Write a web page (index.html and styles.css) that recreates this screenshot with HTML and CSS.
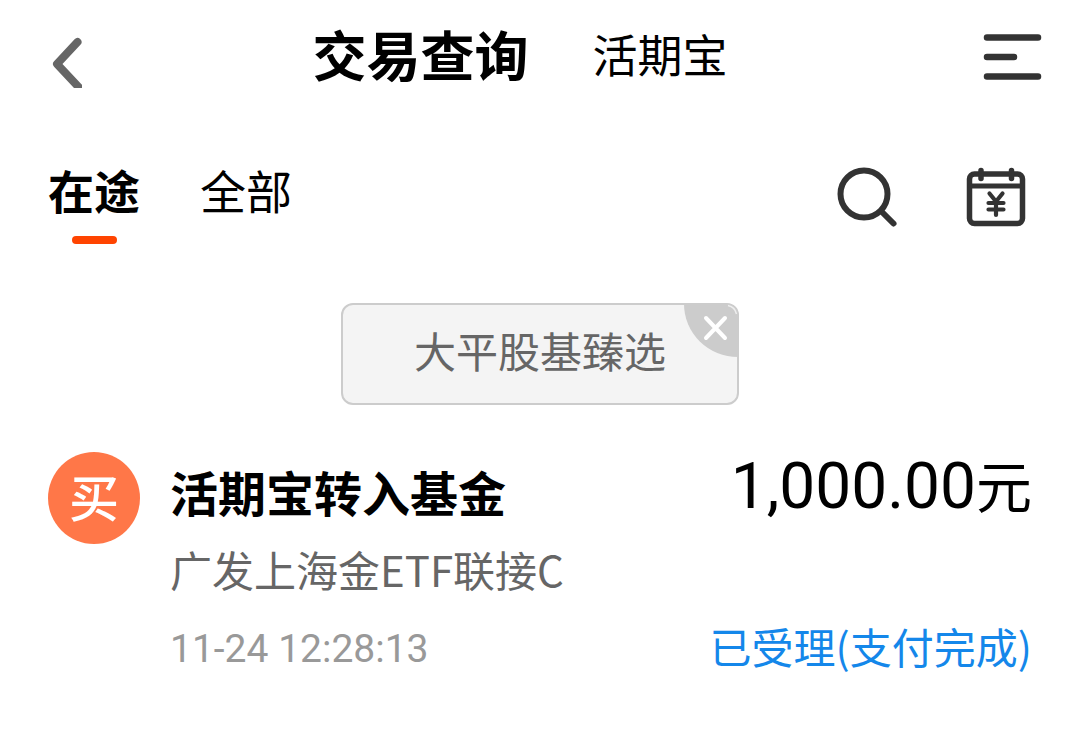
FILE: index.html
```html
<!DOCTYPE html>
<html lang="zh-CN">
<head>
<meta charset="utf-8">
<meta name="viewport" content="width=device-width, initial-scale=1">
<title>交易查询</title>
<link rel="stylesheet" href="styles.css">
</head>
<body>
<header class="topbar">
  <button class="icon-btn" type="button" aria-label="返回">
    <svg width="34" height="64" viewBox="0 0 34 64"><path d="M29.500 18 9 40 31 63.500" fill="none" stroke="#666" stroke-width="8" stroke-linecap="round" stroke-linejoin="round"/></svg>
  </button>
  <nav class="topnav">
    <h1 class="topnav-title">交易查询</h1>
    <a class="topnav-link" href="#">活期宝</a>
  </nav>
  <button class="icon-btn menu-btn" type="button" aria-label="菜单">
    <svg width="60" height="48" viewBox="0 0 60 48"><path d="M5 5.500H56M5 25H32M5 44.500H56" fill="none" stroke="#333" stroke-width="6.500" stroke-linecap="round"/></svg>
  </button>
</header>

<main class="content">
  <section class="filters">
    <nav class="tabs">
      <a class="tab tab-active" href="#" aria-current="page">在途</a>
      <a class="tab" href="#">全部</a>
    </nav>
    <div class="tools">
      <button class="icon-btn" type="button" aria-label="搜索">
        <svg width="62" height="62" viewBox="0 0 62 62"><g fill="none" stroke="#333" stroke-linecap="round"><circle cx="28" cy="28" r="23.500" stroke-width="6"/><path d="M46 46 57.500 57.500" stroke-width="6"/></g></svg>
      </button>
      <button class="icon-btn" type="button" aria-label="选择日期">
        <svg width="60" height="60" viewBox="0 0 60 60"><g fill="none" stroke="#333" stroke-linecap="round" stroke-linejoin="round"><rect x="3.500" y="7" width="53" height="49.500" rx="5" stroke-width="5.500"/><path d="M4 19H56" stroke-width="5"/><path d="M15 3.500V11.500M45.500 3.500V11.500" stroke-width="5.500"/><path d="M23.500 26.500 30 34.500 36.500 26.500M30 35V48M22.500 36H37.500M22.500 42.500H37.500" stroke-width="4.200"/></g></svg>
      </button>
    </div>
  </section>

  <div class="chip">
    <span>大平股基臻选</span>
    <button class="chip-close" type="button" aria-label="移除">
      <svg width="54" height="53" viewBox="0 0 54 53"><path d="M0 0H44A10 10 0 0 1 54 10V53A54 53 0 0 1 0 0Z" fill="#ccc"/><path d="M22 14 41 34M41 14 22 34" stroke="#fff" stroke-width="4" stroke-linecap="round"/><path d="M44 1.500Q51 3 52.500 10" fill="none" stroke="#eee" stroke-width="1.500"/></svg>
    </button>
  </div>

  <article class="record">
    <span class="badge">买</span>
    <div class="detail">
      <h2 class="record-title">活期宝转入基金</h2>
      <p class="fund">广发上海金ETF联接C</p>
      <time class="time">11-24 12:28:13</time>
    </div>
    <div class="result">
      <p class="amount">1,000.00<span class="unit">元</span></p>
      <p class="status">已受理(支付完成)</p>
    </div>
  </article>
</main>
</body>
</html>
```
FILE: styles.css
```css
* {
  box-sizing: border-box;
}

body {
  margin: 0;
  background: #fff;
  color: #000;
  font-family: "Noto Sans CJK SC", "Noto Sans", sans-serif;
}

h1, h2, p {
  margin: 0;
}

a {
  color: inherit;
  text-decoration: none;
}

svg {
  display: block;
}

.icon-btn {
  padding: 0;
  border: 0;
  background: none;
  cursor: pointer;
}

.topbar {
  display: flex;
  align-items: center;
  justify-content: space-between;
  min-height: 112px;
  padding: 0 38px 0 48px;
}

.menu-btn {
  padding-left: 24px;
}

.topnav {
  display: flex;
  align-items: center;
  gap: 64px;
  padding-bottom: 4px;
}

.topnav-title {
  font-size: 54px;
  font-weight: 700;
  line-height: 64px;
}

.topnav-link {
  font-size: 45px;
  line-height: 64px;
}

.content {
  padding: 45px 48px 0;
}

.filters {
  display: flex;
  align-items: flex-start;
  justify-content: space-between;
}

.tabs {
  display: flex;
  gap: 60px;
}

.tab {
  display: flex;
  flex-direction: column;
  align-items: center;
  font-size: 46px;
  line-height: 64px;
}

.tab-active {
  font-weight: 700;
}

.tab-active::after {
  content: "";
  width: 45px;
  height: 8px;
  margin-top: 15px;
  border-radius: 4px;
  background: #ff4400;
}

.tools {
  display: flex;
  gap: 68px;
  padding: 9px 6px 0 0;
}

.chip {
  position: relative;
  width: fit-content;
  margin: 59px auto 0;
  padding: 13px 71px 21px;
  border: 2px solid #ccc;
  border-radius: 12px;
  background: #f4f4f4;
  color: #666;
  font-size: 42px;
  line-height: 64px;
}

.chip-close {
  position: absolute;
  top: -1px;
  right: -1px;
  padding: 0;
  border: 0;
  background: none;
  cursor: pointer;
}

.record {
  display: flex;
  align-items: flex-start;
  padding-top: 47px;
}

.badge {
  flex: none;
  width: 92px;
  height: 92px;
  margin-right: 30px;
  border-radius: 50%;
  background: #ff7748;
  color: #fff;
  font-size: 50px;
  font-weight: 500;
  line-height: 86px;
  text-align: center;
}

.detail {
  flex: 1;
}

.record-title {
  font-size: 48px;
  font-weight: 700;
  line-height: 78px;
}

.fund {
  color: #666;
  font-size: 42px;
  line-height: 78px;
}

.time {
  display: block;
  color: #999;
  font-family: Roboto, "Noto Sans CJK SC", sans-serif;
  font-size: 39px;
  line-height: 82px;
}

.result {
  text-align: right;
}

.amount {
  font-family: Roboto, "Noto Sans CJK SC", sans-serif;
  font-size: 64px;
  line-height: 70px;
}

.unit {
  font-size: 56px;
}

.status {
  margin-top: 82px;
  color: #1487ea;
  font-size: 42px;
  line-height: 80px;
}
```
